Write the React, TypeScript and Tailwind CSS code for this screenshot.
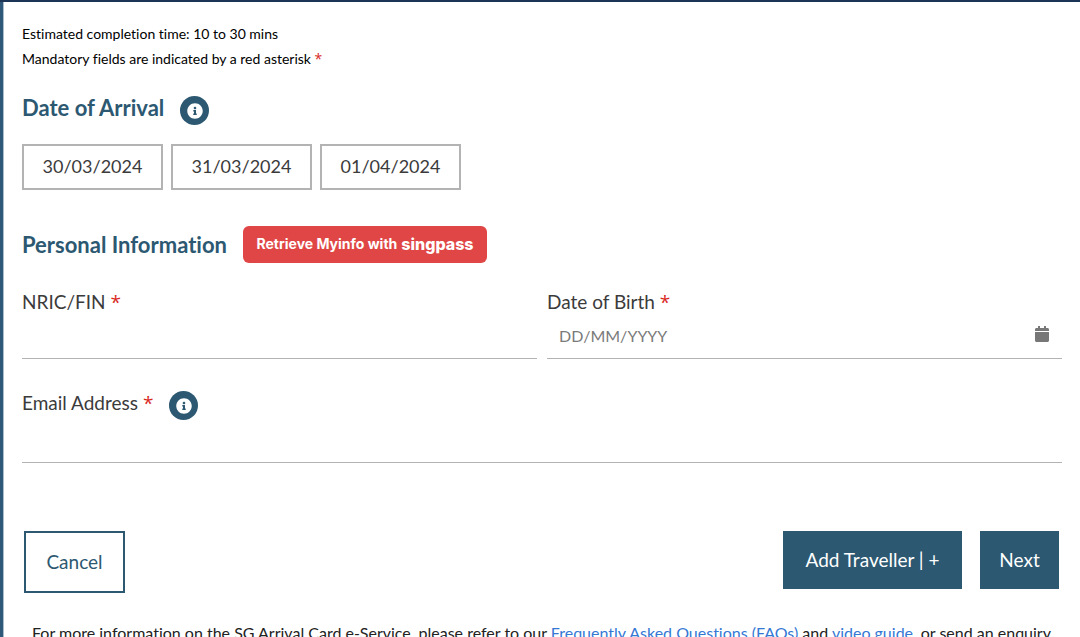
import type { ReactNode } from 'react';
import { FaCalendar, FaInfoCircle } from 'react-icons/fa';

const arrivalDates = ['30/03/2024', '31/03/2024', '01/04/2024'];

function Asterisk() {
  return <span className="font-['Open_Sans',sans-serif] text-[#d9281e]">*</span>;
}

function InfoButton({ label }: { label: string }) {
  return (
    <button
      type="button"
      aria-label={label}
      className="flex size-[29px] items-center justify-center rounded-full bg-[#2c5871] text-white"
    >
      <FaInfoCircle className="size-4" />
    </button>
  );
}

function FieldLabel({ htmlFor, children }: { htmlFor: string; children: ReactNode }) {
  return (
    <label htmlFor={htmlFor} className="block text-[19px] leading-6">
      {children} <Asterisk />
    </label>
  );
}

export default function App() {
  return (
    <div className="border-t-2 border-[#1c3557] bg-white font-['Lato','Open_Sans',sans-serif] text-[#3b3b3b] [font-variant-ligatures:no-common-ligatures]">
      <main className="border-l-3 border-[#305878] pt-[19px] pr-[18px] pb-8 pl-[19px] shadow-[inset_1px_0_0_#a9bfcd]">
        <div className="text-[14px] leading-[25px] text-black">
          <p>Estimated completion time: 10 to 30 mins</p>
          <p>
            Mandatory fields are indicated by a red asterisk <Asterisk />
          </p>
        </div>

        <form>
          <div className="mt-[25px] flex items-start gap-4">
            <h2 className="text-[22px] leading-6 font-bold text-[#2c5871]">Date of Arrival</h2>
            <InfoButton label="About date of arrival" />
          </div>
          <div className="mt-[19px] flex gap-2">
            {arrivalDates.map((date) => (
              <button
                key={date}
                type="button"
                className="h-[46px] w-[141px] border-2 border-[#b3b3b3] pb-0.5 text-[18px]"
              >
                {date}
              </button>
            ))}
          </div>

          <div className="mt-9 flex items-center gap-4">
            <h2 className="text-[22px] leading-6 font-bold text-[#2c5871]">Personal Information</h2>
            <button
              type="button"
              className="flex h-[37px] w-[244px] items-center justify-center gap-1 rounded-md bg-[#df4645] pb-0.5 font-['Inter',sans-serif] text-[14px] font-bold whitespace-nowrap text-white"
            >
              Retrieve Myinfo with <span className="text-[16px] font-extrabold">singpass</span>
            </button>
          </div>

          <div className="mt-[27px] grid grid-cols-2 gap-[10px]">
            <div>
              <FieldLabel htmlFor="nric">NRIC/FIN</FieldLabel>
              <input
                id="nric"
                type="text"
                className="h-[45px] w-full border-b border-[#b3b3b3] px-3 text-[16px] outline-none"
              />
            </div>
            <div>
              <FieldLabel htmlFor="dob">Date of Birth</FieldLabel>
              <div className="flex h-[45px] items-center border-b border-[#b3b3b3] px-3">
                <input
                  id="dob"
                  type="text"
                  placeholder="DD/MM/YYYY"
                  className="min-w-0 flex-1 text-[16px] outline-none placeholder:text-[#7a7a7a]"
                />
                <button type="button" aria-label="Pick a date" className="pb-1 text-[#777777]">
                  <FaCalendar className="size-4" />
                </button>
              </div>
            </div>
          </div>

          <div className="mt-8 flex items-start gap-4">
            <FieldLabel htmlFor="email">Email Address</FieldLabel>
            <InfoButton label="About email address" />
          </div>
          <input
            id="email"
            type="email"
            className="h-[43px] w-full border-b border-[#b3b3b3] px-3 text-[16px] outline-none"
          />

          <div className="mt-[68px] flex items-start justify-between pr-[3px] pl-0.5 text-[19px]">
            <button
              type="button"
              className="h-[62px] w-[101px] border-2 border-[#2c5871] text-[#2c5871]"
            >
              Cancel
            </button>
            <div className="flex gap-[18px] text-white">
              <button type="button" className="h-[58px] w-[179px] bg-[#2c5871]">
                Add Traveller | +
              </button>
              <button type="submit" className="h-[58px] w-[79px] bg-[#2c5871]">
                Next
              </button>
            </div>
          </div>
        </form>

        <p className="mt-7 px-[10px] text-[16px] leading-6 text-[#222222]">
          For more information on the SG Arrival Card e-Service, please refer to our{' '}
          <a href="#faqs" className="text-[#3478d4]">
            Frequently Asked Questions (FAQs)
          </a>{' '}
          and{' '}
          <a href="#video-guide" className="text-[#3478d4]">
            video guide
          </a>
          , or send an enquiry
        </p>
      </main>
    </div>
  );
}
